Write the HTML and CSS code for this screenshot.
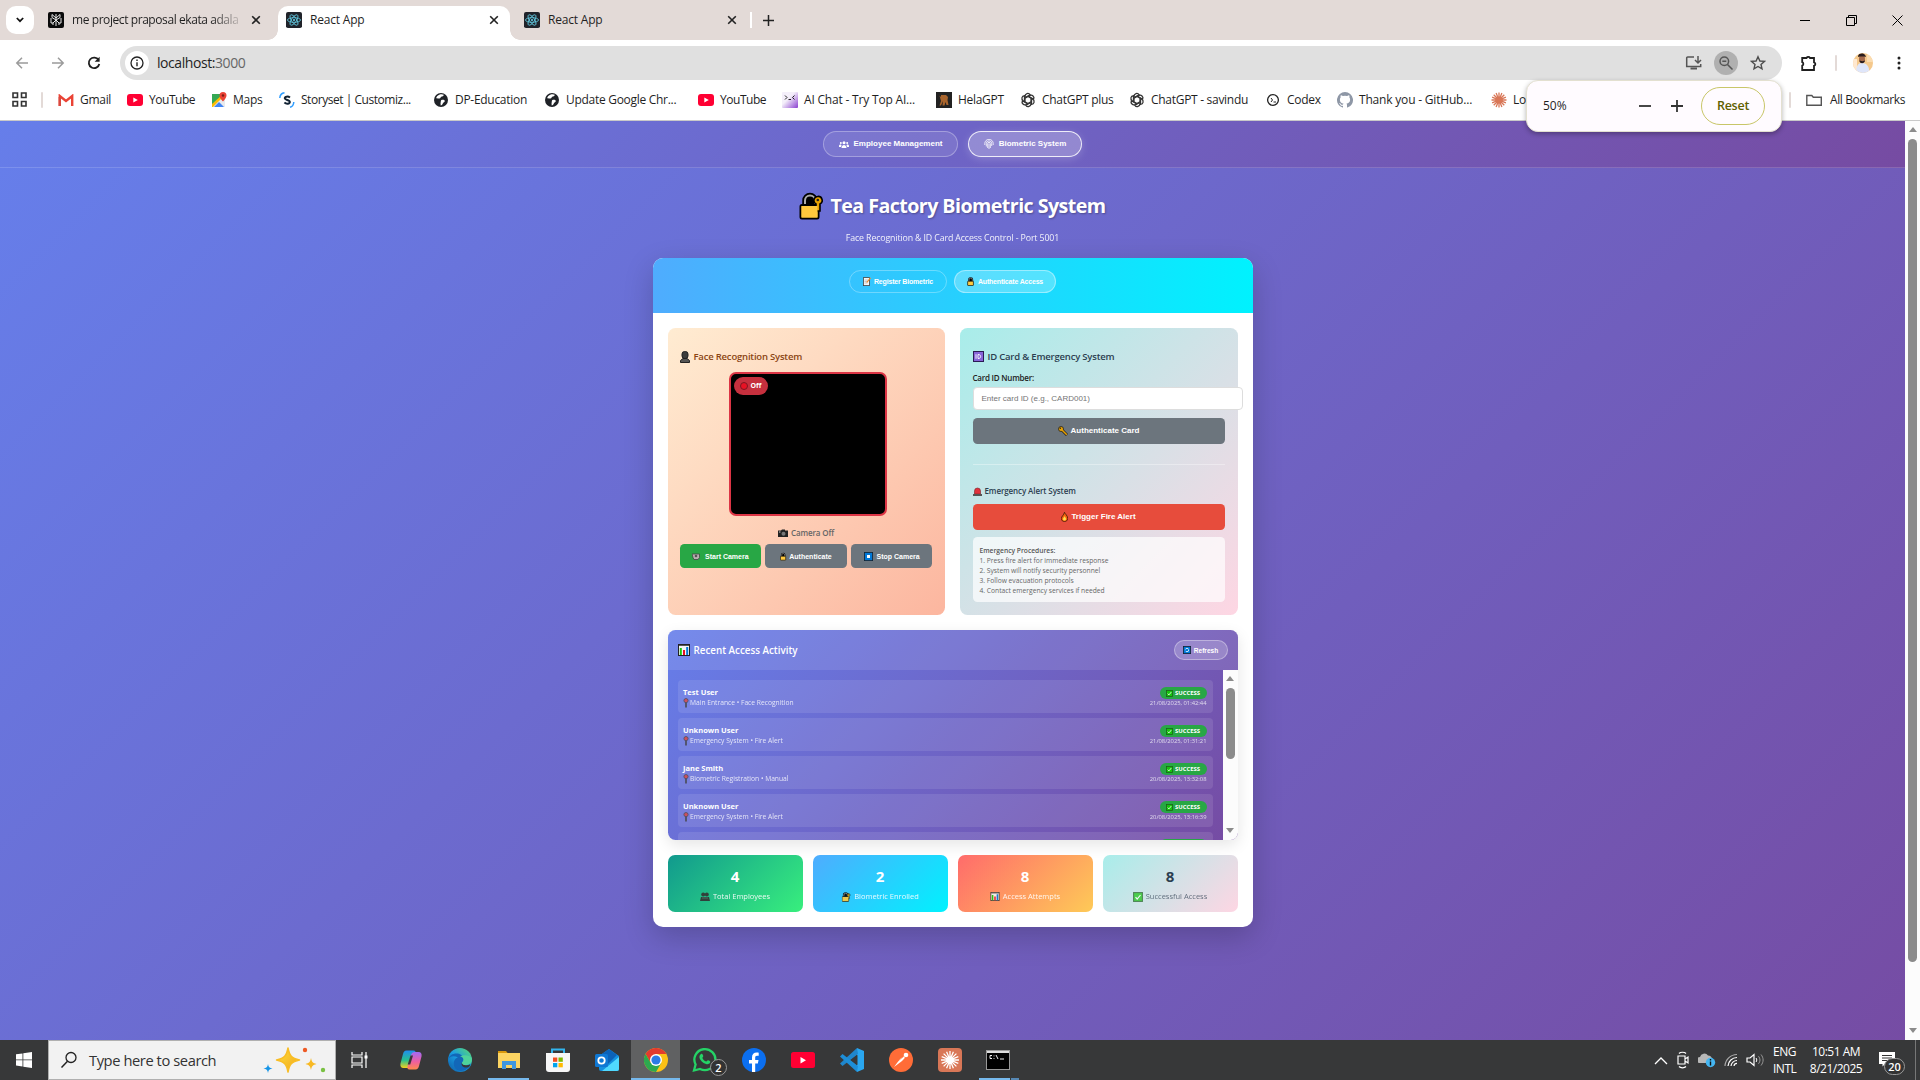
FILE: index.html
```html
<!DOCTYPE html>
<html lang="en">
<head>
<meta charset="utf-8">
<title>React App</title>
<link rel="stylesheet" href="styles.css">
</head>
<body>
<svg class="defs" width="0" height="0" aria-hidden="true">
  <defs>
    <linearGradient id="gEdge" x1="0" y1="1" x2="1" y2="0"><stop offset="0" stop-color="#0c59a4"/><stop offset=".5" stop-color="#1b9de2"/><stop offset="1" stop-color="#5fe06a"/></linearGradient>
    <linearGradient id="gCopA" x1="0" y1="0" x2="0" y2="1"><stop offset="0" stop-color="#1f8df0"/><stop offset=".55" stop-color="#27c08f"/><stop offset="1" stop-color="#f4d01c"/></linearGradient>
    <linearGradient id="gCopB" x1="0" y1="0" x2="0" y2="1"><stop offset="0" stop-color="#a06af5"/><stop offset=".55" stop-color="#ee5fa0"/><stop offset="1" stop-color="#ff8a4c"/></linearGradient>
    <linearGradient id="gStar" x1="0" y1="0" x2="1" y2="1"><stop offset="0" stop-color="#ffe13d"/><stop offset="1" stop-color="#f0a31a"/></linearGradient>
    <linearGradient id="gAi" x1="0" y1="0" x2="1" y2="1"><stop offset=".4" stop-color="#f4effa"/><stop offset="1" stop-color="#8a3fd0"/></linearGradient>
  </defs>
  <symbol id="react" viewBox="0 0 16 18" preserveAspectRatio="none"><rect width="16" height="18" rx="2" fill="#20232a"/><g fill="none" stroke="#61c7de" stroke-width=".9"><ellipse cx="8" cy="9" rx="6.6" ry="2.6"/><ellipse cx="8" cy="9" rx="6.6" ry="2.6" transform="rotate(60 8 9)"/><ellipse cx="8" cy="9" rx="6.6" ry="2.6" transform="rotate(120 8 9)"/></g><circle cx="8" cy="9" r="1.2" fill="#61c7de"/></symbol>
  <symbol id="close" viewBox="0 0 10 10"><path d="M1.2 1.2l7.6 7.6M8.8 1.2L1.2 8.8" stroke="#222" stroke-width="1.6"/></symbol>
  <symbol id="yt" viewBox="0 0 16 12"><rect width="16" height="12" rx="3" fill="#f03"/><path d="M6.3 3.4v5.2L10.8 6z" fill="#fff"/></symbol>
  <symbol id="globe" viewBox="0 0 16 16"><circle cx="8" cy="8" r="7" fill="#1f2227"/><path d="M5 3.5c2-1.8 4.500-1.600 5.800-.7-.3 1.500-1.500 1.600-2.600 2-.8.4-.5 1.600-1.800 1.800-1.300 0-2-.4-3.200-.4.1-1 .8-2 1.800-2.700zM8.300 8c1.500-.7 3.400-.3 3.500 1.100 0 1.500-1.600 1.300-2 2.400-.3.900-1 1.900-2.100 2 .1-1-.3-1.500-.1-2.600.2-.9.200-2.300.7-2.900z" fill="#fff"/></symbol>
  <symbol id="gpt" viewBox="0 0 16 16"><g fill="none" stroke="#333" stroke-width="1.250"><path d="M5 9.700V4.200a2.800 2.800 0 0 1 5.100-1.500L5.600 5.300"/><path d="M5 9.700V4.200a2.800 2.800 0 0 1 5.100-1.500L5.600 5.300" transform="rotate(60 8 8)"/><path d="M5 9.700V4.200a2.800 2.800 0 0 1 5.100-1.500L5.600 5.300" transform="rotate(120 8 8)"/><path d="M5 9.700V4.200a2.800 2.800 0 0 1 5.100-1.500L5.600 5.300" transform="rotate(180 8 8)"/><path d="M5 9.700V4.200a2.800 2.800 0 0 1 5.100-1.500L5.600 5.300" transform="rotate(240 8 8)"/><path d="M5 9.700V4.200a2.800 2.800 0 0 1 5.100-1.500L5.600 5.300" transform="rotate(300 8 8)"/></g></symbol>
  <symbol id="burst" viewBox="-8 -8 16 16"><path d="M0-7.500V7.500M-7.500 0H7.500M-5.300-5.300L5.300 5.300M-5.300 5.300L5.300-5.300M-2.900-6.900L2.900 6.900M2.900-6.900L-2.900 6.900M-6.900-2.900L6.900 2.900M-6.900 2.900L6.900-2.900" stroke="currentColor" stroke-width="1.300"/></symbol>
  <symbol id="lock" viewBox="0 0 24 28"><path d="M6 14V8.500a5 5 0 0 1 10 0V14" fill="#000" stroke="#000" stroke-width="5.500"/><path d="M6 13V8.500a5 5 0 0 1 10 0V13" fill="#000" stroke="#aaa" stroke-width="2"/><rect x="1.500" y="13" width="18" height="13.500" rx="1.500" fill="#ffc83d" stroke="#000" stroke-width="2"/></symbol>
  <symbol id="lockkey" viewBox="0 0 24 28"><use href="#lock" width="24" height="28"/><path d="M18.500 4.500a4 4 0 0 1 2.500 7.500v7h-4v-7a4 4 0 0 1 1.500-7.500z" fill="#e8a200" stroke="#000" stroke-width="1.600"/><rect x="2.500" y="14" width="16" height="11.500" fill="#ffc83d"/><circle cx="18.800" cy="8" r="1.300" fill="#222"/></symbol>
  <symbol id="chart" viewBox="0 0 12 12"><rect x=".5" y=".5" width="11" height="11" fill="#f4f4f4" stroke="#222"/><path d="M1 1.500h10" stroke="#555"/><rect x="1.800" y="4" width="2" height="7" fill="#16c60c"/><rect x="5" y="6" width="2" height="5" fill="#e81224"/><rect x="8.200" y="3" width="2" height="8" fill="#0078d7"/></symbol>
  <symbol id="check" viewBox="0 0 12 12"><rect x=".7" y=".7" width="10.600" height="10.600" fill="#16c60c" stroke="#1b5e1b" stroke-width="1.300"/><path d="M3 6.200l2 2.200 4-4.800" fill="none" stroke="#fff" stroke-width="1.400"/></symbol>
  <symbol id="pin" viewBox="0 0 6 10"><path d="M3 3v6.500" stroke="#444" stroke-width="1.800"/><circle cx="3" cy="2.600" r="2.100" fill="#e0453e" stroke="#444" stroke-width=".8"/></symbol>
  <symbol id="person" viewBox="0 0 10 12"><rect x="2" y=".5" width="6" height="7" rx="2.600" fill="#3c3c3c" stroke="#222"/><path d="M.5 11.500V9.500l2.500-2h4l2.500 2v2z" fill="#555" stroke="#222"/></symbol>
  <symbol id="people" viewBox="0 0 10 9"><circle cx="3.200" cy="2.500" r="2" fill="#333"/><circle cx="6.800" cy="2.500" r="2" fill="#333"/><path d="M0 9l1-4h8l1 4z" fill="#333"/><path d="M2 6h6" stroke="#6a8a80" stroke-width=".6"/></symbol>
  <symbol id="memo" viewBox="0 0 8 9"><rect x=".4" y=".6" width="6" height="8" fill="#f5f5f5" stroke="#444" stroke-width=".8"/><path d="M1.500 3h3.500M1.500 4.500h3.500M1.500 6h3" stroke="#999" stroke-width=".5"/><path d="M7.500.8L3.800 5.500" stroke="#f08a24" stroke-width="1.200"/></symbol>
</svg>

<div class="tabstrip">
  <button class="tabsearch"><svg width="8" height="6" viewBox="0 0 8 6"><path d="M.8 1l3.200 3.200L7.200 1" fill="none" stroke="#111" stroke-width="1.700"/></svg></button>
  <div class="tab first"><svg width="16" height="16" viewBox="0 0 16 16"><rect width="16" height="16" rx="2" fill="#0a0a0a"/><path d="M8 2v12M4 2.500v3L8 8l4-2.500v-3L8 6 4 2.500zM3 6v5h2l3-3 3 3h2V6M5 13v-2l3-3 3 3v2" fill="none" stroke="#e8e8e8" stroke-width="1"/></svg><span class="t faded">me project praposal ekata adala</span><svg class="x" width="10" height="10"><use href="#close"/></svg></div>
  <div class="tab active"><svg width="16" height="16"><use href="#react"/></svg><span class="t">React App</span><svg class="x" width="10" height="10"><use href="#close"/></svg></div>
  <div class="tab last"><svg width="16" height="16"><use href="#react"/></svg><span class="t">React App</span><svg class="x" width="10" height="10"><use href="#close"/></svg></div>
  <i class="tabsep"></i>
  <svg class="plus" width="11" height="11" viewBox="0 0 11 11"><path d="M5.500 0v11M0 5.500h11" stroke="#222" stroke-width="1.500"/></svg>
  <div class="winctl">
    <svg width="11" height="11" viewBox="0 0 11 11"><path d="M0 5.500h10" stroke="#000"/></svg>
    <svg width="11" height="11" viewBox="0 0 11 11"><path d="M.5 2.500h8v8h-8zM2.500 2.500v-2h8v8h-2" fill="none" stroke="#000"/></svg>
    <svg width="11" height="11" viewBox="0 0 11 11"><path d="M.5.5l10 10M10.500.5l-10 10" stroke="#000"/></svg>
  </div>
</div>

<div class="toolbar">
  <svg class="nav" width="16" height="16" viewBox="0 0 16 16"><path d="M14 8H2.800M8 2.800L2.800 8 8 13.200" fill="none" stroke="#9b9b9b" stroke-width="1.500"/></svg>
  <svg class="nav" width="16" height="16" viewBox="0 0 16 16"><path d="M2 8h11.200M8 2.800L13.200 8 8 13.200" fill="none" stroke="#9b9b9b" stroke-width="1.500"/></svg>
  <svg class="nav" width="16" height="16" viewBox="0 0 16 16"><path d="M12.600 5A5.300 5.300 0 1 0 13.300 9" fill="none" stroke="#1f1f1f" stroke-width="1.800"/><path d="M13.600 1.800v5h-5z" fill="#1f1f1f"/></svg>
  <div class="omnibox">
    <span class="info"><svg width="14" height="14" viewBox="0 0 14 14"><circle cx="7" cy="7" r="6" fill="none" stroke="#222" stroke-width="1.300"/><path d="M7 6.300v4M7 3.500v1.500" stroke="#222" stroke-width="1.400"/></svg></span>
    <span class="t url">localhost:<em>3000</em></span>
    <svg class="install" width="18" height="16" viewBox="0 0 18 16"><path d="M9 2H2.700A1 1 0 0 0 1.700 3v8.500h14V9" fill="none" stroke="#555" stroke-width="1.500"/><path d="M5.500 12.500h6.500v2H5.500z" fill="#555"/><path d="M13 1v6.500M10 5l3 3 3-3" fill="none" stroke="#555" stroke-width="1.500"/></svg>
    <span class="zoomic"><svg width="16" height="16" viewBox="0 0 16 16"><circle cx="6.300" cy="6.300" r="4.300" fill="none" stroke="#555" stroke-width="1.500"/><path d="M9.500 9.500l5 5M4.300 6.300h4" stroke="#555" stroke-width="1.500"/></svg></span>
    <svg width="16" height="16" viewBox="0 0 16 16"><path d="M8 1.800l1.900 4.200 4.500.4-3.400 3 1 4.500L8 11.500l-4 2.400 1-4.500-3.400-3 4.500-.4z" fill="none" stroke="#4d4d4d" stroke-width="1.400"/></svg>
  </div>
  <svg class="ext" width="18" height="18" viewBox="0 0 18 18"><path d="M2.200 4h4.300a2 2 0 0 1 3.500 0h4v4.300a1.800 1.800 0 0 1 0 3.500V16H2.200v-4.300a1.900 1.900 0 0 0 0-3.500z" fill="none" stroke="#1f1f1f" stroke-width="1.800"/></svg>
  <i class="sep"></i>
  <svg class="avatar" width="20" height="20" viewBox="0 0 20 20"><clipPath id="av"><circle cx="10" cy="10" r="10"/></clipPath><g clip-path="url(#av)"><rect width="20" height="20" fill="#f5c98d"/><path d="M0 6h4v14H0z" fill="#ffe8d0"/><path d="M14 0h6v9h-6z" fill="#fbdcb0"/><path d="M3 20c0-7 2-10 6-10s8 3 7 10z" fill="#dfe6fa"/><ellipse cx="9" cy="6" rx="3" ry="4" fill="#a5694a"/><path d="M5 4c0-5 7-5 8 0l-2-.5H7zM6.500 7.500c0 3.500 5 3.500 5.500 0l-2.500.8z" fill="#2a1c1c"/></g></svg>
  <svg class="dots" width="4" height="16" viewBox="0 0 4 16"><circle cx="2" cy="3" r="1.500"/><circle cx="2" cy="8" r="1.500"/><circle cx="2" cy="13" r="1.500"/></svg>
</div>

<div class="bookmarks">
  <div class="bm apps"><svg width="15" height="15" viewBox="0 0 15 15"><path d="M1 1h4.500v4.500H1zM9.500 1H14v4.500H9.500zM1 9.500h4.500V14H1zM9.500 9.500H14V14H9.500z" fill="none" stroke="#333" stroke-width="1.600"/></svg></div>
  <i class="sep"></i>
  <div class="bm"><svg width="16" height="12" viewBox="0 0 16 12"><path d="M1.800 12V2l6.200 5 6.200-5v10" fill="none" stroke="#ea4335" stroke-width="2.400"/><path d="M1.800 3v9" stroke="#d9493f" stroke-width="2.400"/></svg><span class="t">Gmail</span></div>
  <div class="bm tight"><svg width="16" height="12"><use href="#yt"/></svg><span class="t">YouTube</span></div>
  <div class="bm"><svg width="16" height="16" viewBox="0 0 16 16"><path d="M1 2h13v13H1z" fill="#34a853"/><path d="M1 15L14 2v13z" fill="#e8eaed"/><path d="M3 15l5-5 5 5z" fill="#4285f4"/><path d="M1 12L12 2h3L2 15H1z" fill="#fbbc04"/><path d="M12 0a3.500 3.500 0 0 1 3.500 3.500c0 2.500-3.500 6-3.500 6s-3.500-3.500-3.500-6A3.500 3.500 0 0 1 12 0z" fill="#ea4335"/><circle cx="12" cy="3.500" r="1.200" fill="#7a1d15"/></svg><span class="t">Maps</span></div>
  <div class="bm tight"><svg width="16" height="16" viewBox="0 0 16 16"><path d="M.8 6C1 3 2.500 1.200 5.500.8M14.800 10c-.2 3-1.500 4.800-3.800 5.200" fill="none" stroke="#2d9cff" stroke-width="1.500"/><path d="M11 5.500C9 4 5.500 4.400 5.800 6.400c.3 1.800 5 1.300 5 3.600 0 2-3.500 2.200-5.400.6" fill="none" stroke="#123" stroke-width="2"/></svg><span class="t">Storyset | Customiz...</span></div>
  <div class="bm"><svg width="16" height="16"><use href="#globe"/></svg><span class="t">DP-Education</span></div>
  <div class="bm"><svg width="16" height="16"><use href="#globe"/></svg><span class="t">Update Google Chr...</span></div>
  <div class="bm tight"><svg width="16" height="12"><use href="#yt"/></svg><span class="t">YouTube</span></div>
  <div class="bm loose"><svg width="16" height="16" viewBox="0 0 16 16"><rect width="16" height="16" rx="1" fill="url(#gAi)"/><path d="M3 3.500l2 2-2 2M12.500 3.500l-2 2 2 2M6.500 7.500h2.500" fill="none" stroke="#222"/></svg><span class="t">AI Chat - Try Top AI...</span></div>
  <div class="bm"><svg width="16" height="16" viewBox="0 0 16 16"><rect width="16" height="16" fill="#222"/><path d="M3.500 3.500L5 5V3h5l2 2-.5 3 1 5h-2l-1-3-1 3.500h-2L7 9 5 13.500H3.500L5 9z" fill="#a8642c"/></svg><span class="t">HelaGPT</span></div>
  <div class="bm"><svg width="16" height="16"><use href="#gpt"/></svg><span class="t">ChatGPT plus</span></div>
  <div class="bm"><svg width="16" height="16"><use href="#gpt"/></svg><span class="t">ChatGPT - savindu</span></div>
  <div class="bm"><svg width="16" height="16" viewBox="0 0 16 16"><circle cx="8" cy="8" r="5.400" fill="none" stroke="#222" stroke-width="1.300"/><path d="M6 6l1.500 2L6 10M8.500 10h2.500" fill="none" stroke="#222"/></svg><span class="t">Codex</span></div>
  <div class="bm loose"><svg width="16" height="16" viewBox="0 0 16 16"><path d="M8 0a8 8 0 0 0-2.500 15.600c.4.100.5-.2.500-.4v-1.400c-2.200.5-2.700-1-2.700-1-.4-.9-.9-1.200-.9-1.200-.7-.5.1-.5.100-.5.800.1 1.200.8 1.200.8.700 1.200 1.900.9 2.300.7.100-.5.300-.9.500-1.100-1.800-.2-3.600-.9-3.600-4 0-.9.300-1.600.8-2.200-.1-.2-.4-1 .1-2.100 0 0 .7-.2 2.200.8a7.600 7.600 0 0 1 4 0c1.500-1 2.200-.8 2.200-.8.500 1.100.2 1.900.1 2.100.5.600.8 1.300.8 2.200 0 3.100-1.900 3.800-3.700 4 .3.300.6.700.6 1.500v2.200c0 .2.100.5.500.4A8 8 0 0 0 8 0z" fill="#8e97a6"/></svg><span class="t">Thank you - GitHub...</span></div>
  <div class="bm claude"><svg width="16" height="16"><use href="#burst"/></svg><span class="t">Lo</span></div>
  <i class="sep"></i>
  <div class="bm all"><svg width="16" height="12" viewBox="0 0 16 12"><path d="M.8 1.500h5l1.500 1.800h8v8H.8z" fill="none" stroke="#555" stroke-width="1.400"/></svg><span class="t">All Bookmarks</span></div>
</div>

<div class="zoombubble">
  <span class="t pct">50%</span>
  <svg class="minus" width="12" height="12" viewBox="0 0 12 12"><path d="M0 6h12" stroke="#333" stroke-width="1.800"/></svg>
  <svg width="12" height="12" viewBox="0 0 12 12"><path d="M0 6h12M6 0v12" stroke="#333" stroke-width="1.800"/></svg>
  <button class="reset"><span class="t">Reset</span></button>
</div>

<div class="viewport">
  <div class="page">
    <nav class="topnav">
      <button class="pill emp"><svg width="10" height="7" viewBox="0 0 10 7"><g fill="#fff"><circle cx="5" cy="1.800" r="1.500"/><circle cx="1.800" cy="2" r="1"/><circle cx="8.200" cy="2" r="1"/><path d="M2.500 7c0-4 5-4 5 0zM0 5c0-2 2.500-2 2.500-.5L2 6H0zM10 5c0-2-2.500-2-2.500-.5L8 6h2z"/></g></svg><span class="t">Employee Management</span></button>
      <button class="pill bio"><svg width="10" height="10" viewBox="0 0 10 10"><g fill="none" stroke="#fff" stroke-width=".8"><path d="M.8 6V4.500a4.200 4.200 0 0 1 8.400 0V6M2.300 7.500v-3a2.700 2.700 0 0 1 5.400 0V7M3.700 9V4.600a1.300 1.300 0 0 1 2.600 0V9M5 4.500V10"/></g></svg><span class="t">Biometric System</span></button>
    </nav>
    <main class="main">
      <h1><svg width="24" height="28"><use href="#lockkey"/></svg><span class="t">Tea Factory Biometric System</span></h1>
      <p class="sub"><span class="t">Face Recognition &amp; ID Card Access Control - Port 5001</span></p>
      <div class="card">
        <div class="modes">
          <button class="mode reg"><svg width="8" height="9"><use href="#memo"/></svg><span class="t">Register Biometric</span></button>
          <button class="mode on auth"><svg width="8" height="9"><use href="#lock"/></svg><span class="t">Authenticate Access</span></button>
        </div>
        <div class="content">
          <div class="panels">
            <section class="panel face">
              <h3><svg width="10" height="12"><use href="#person"/></svg><span class="t">Face Recognition System</span></h3>
              <div class="camera"><span class="off"><i></i><span class="t">Off</span></span></div>
              <p class="camstate"><svg width="10" height="8" viewBox="0 0 10 8"><path d="M0 1.500h3L4 .5h3v1h3V8H0z" fill="#222"/><circle cx="5.500" cy="4.700" r="2" fill="#777"/><path d="M1 3h1.500" stroke="#ccc"/></svg><span class="t">Camera Off</span></p>
              <div class="btns">
                <button class="b green"><svg width="9" height="7" viewBox="0 0 9 7"><path d="M0 1h7.500v3.500L6 6.500H2L1 4.500z" fill="#b9b0b0" stroke="#444" stroke-width=".8"/><circle cx="4" cy="3" r="1.300" fill="#555"/></svg><span class="t">Start Camera</span></button>
                <button class="b grey a2"><svg width="7" height="9"><use href="#lock"/></svg><span class="t">Authenticate</span></button>
                <button class="b grey a3"><svg width="9" height="9" viewBox="0 0 9 9"><rect x=".4" y=".4" width="8.200" height="8.200" fill="#0078d7" stroke="#123" stroke-width=".8"/><rect x="3" y="3" width="3" height="3" fill="#fff"/></svg><span class="t">Stop Camera</span></button>
              </div>
            </section>
            <section class="panel idc">
              <h3><svg width="11" height="11" viewBox="0 0 11 11"><rect x=".5" y=".5" width="10" height="10" fill="#8764d8" stroke="#2b1b55"/><path d="M3 3.200v4.600M5 3.500v4c3.500.3 3.500-4.300 0-4z" fill="none" stroke="#fff" stroke-width=".9"/></svg><span class="t">ID Card &amp; Emergency System</span></h3>
              <label><span class="t">Card ID Number:</span></label>
              <div class="input"><span class="t">Enter card ID (e.g., CARD001)</span></div>
              <button class="wide grey"><svg width="10" height="10" viewBox="0 0 10 10"><path d="M3 3l6 6" stroke="#222" stroke-width="3"/><circle cx="3" cy="3" r="2.500" fill="#e8a200" stroke="#222" stroke-width=".8"/><path d="M3 3l5.800 5.800" stroke="#e8a200" stroke-width="1.500"/><circle cx="2.300" cy="2.300" r=".7" fill="#222"/></svg><span class="t">Authenticate Card</span></button>
              <hr>
              <h4><svg width="9" height="9" viewBox="0 0 9 9"><path d="M1.500 7V4a3 3 0 0 1 6 0v3z" fill="#e0323c" stroke="#7a2228" stroke-width=".6"/><path d="M0 8h9" stroke="#555" stroke-width="2"/></svg><span class="t">Emergency Alert System</span></h4>
              <button class="wide red"><svg width="7" height="10" viewBox="0 0 7 10"><path d="M3.500.3C4 2 6.700 3.500 6.700 6.500c0 4-6.400 4-6.400 0C.3 4.500 3 3 3.500.3z" fill="#f7630c" stroke="#3a1a08" stroke-width=".8"/><path d="M3.600 4c.3 1.200 1.400 1.600 1.400 3a1.500 1.500 0 0 1-3 0c0-1.400 1.300-1.500 1.600-3z" fill="#ffe14d"/></svg><span class="t">Trigger Fire Alert</span></button>
              <div class="proc"><strong><span class="t">Emergency Procedures:</span></strong><ol><li><span class="t">1. Press fire alert for immediate response</span></li><li><span class="t">2. System will notify security personnel</span></li><li><span class="t">3. Follow evacuation protocols</span></li><li><span class="t">4. Contact emergency services if needed</span></li></ol></div>
            </section>
          </div>
          <section class="activity">
            <header><h3><svg width="12" height="12"><use href="#chart"/></svg><span class="t">Recent Access Activity</span></h3>
              <button class="refresh"><svg width="8" height="8" viewBox="0 0 8 8"><rect x=".4" y=".4" width="7.200" height="7.200" fill="#0078d7" stroke="#123" stroke-width=".8"/><circle cx="4" cy="4" r="1.700" fill="none" stroke="#fff" stroke-width=".8" stroke-dasharray="4 1.300"/></svg><span class="t">Refresh</span></button></header>
            <div class="scroll">
              <div class="rows">
                <article class="row"><div><b class="t">Test User</b><small><svg width="6" height="10"><use href="#pin"/></svg><span class="t">Main Entrance • Face Recognition</span></small></div><div class="r"><span class="ok"><svg width="7" height="7"><use href="#check"/></svg><span class="t">SUCCESS</span></span><time class="t">21/08/2025, 01:42:44</time></div></article>
                <article class="row"><div><b class="t">Unknown User</b><small><svg width="6" height="10"><use href="#pin"/></svg><span class="t">Emergency System • Fire Alert</span></small></div><div class="r"><span class="ok"><svg width="7" height="7"><use href="#check"/></svg><span class="t">SUCCESS</span></span><time class="t">21/08/2025, 01:31:21</time></div></article>
                <article class="row"><div><b class="t">Jane Smith</b><small><svg width="6" height="10"><use href="#pin"/></svg><span class="t">Biometric Registration • Manual</span></small></div><div class="r"><span class="ok"><svg width="7" height="7"><use href="#check"/></svg><span class="t">SUCCESS</span></span><time class="t">20/08/2025, 13:32:08</time></div></article>
                <article class="row"><div><b class="t">Unknown User</b><small><svg width="6" height="10"><use href="#pin"/></svg><span class="t">Emergency System • Fire Alert</span></small></div><div class="r"><span class="ok"><svg width="7" height="7"><use href="#check"/></svg><span class="t">SUCCESS</span></span><time class="t">20/08/2025, 13:16:39</time></div></article>
                <article class="row"><div></div><div class="r"><span class="ok"></span></div></article>
              </div>
              <div class="sbar"><i class="up"></i><i class="thumb"></i><i class="down"></i></div>
            </div>
          </section>
          <div class="stats">
            <div class="stat s1"><strong>4</strong><span><svg width="10" height="9"><use href="#people"/></svg><span class="t">Total Employees</span></span></div>
            <div class="stat s2"><strong>2</strong><span><svg width="10" height="10"><use href="#lockkey"/></svg><span class="t">Biometric Enrolled</span></span></div>
            <div class="stat s3"><strong>8</strong><span><svg width="10" height="9"><use href="#chart"/></svg><span class="t">Access Attempts</span></span></div>
            <div class="stat s4"><strong>8</strong><span><svg width="10" height="10"><use href="#check"/></svg><span class="t">Successful Access</span></span></div>
          </div>
        </div>
      </div>
    </main>
  </div>
  <div class="sbar pagebar"><i class="up"></i><i class="thumb"></i><i class="down"></i></div>
</div>

<div class="taskbar">
  <div class="start"><svg width="16" height="16" viewBox="0 0 16 16"><path d="M0 2.300l6.500-.9v6.100H0zM7.300 1.300L16 0v7.500H7.300zM0 8.300h6.500v6.200L0 13.600zM7.300 8.300H16V16l-8.700-1.300z" fill="#fff"/></svg></div>
  <div class="search"><svg width="18" height="18" viewBox="0 0 18 18"><circle cx="11" cy="6.500" r="5" fill="none" stroke="#222" stroke-width="1.300"/><path d="M7.500 10.300L1.500 16.500" stroke="#222" stroke-width="1.500"/></svg><span class="t">Type here to search</span>
    <svg class="spark" width="64" height="30" viewBox="0 0 64 30"><path d="M25 3c1.500 8 3.500 10 11.500 12C28.500 17 26.500 19 25 27c-1.500-8-3.500-10-11.500-12C21.500 13 23.500 11 25 3z" fill="url(#gStar)" stroke="#f8bd25" stroke-width="1.500" stroke-linejoin="round"/><path d="M48 13c.8 4 1.800 5 5.500 6-3.700 1-4.700 2-5.500 6-.8-4-1.800-5-5.500-6 3.700-1 4.700-2 5.500-6z" fill="#f8b923"/><path d="M5 19c.5 3 1.500 4 4.500 4.500C6.500 24 5.500 25 5 28c-.5-3-1.500-4-4.500-4.500C3.500 23 4.500 22 5 19z" fill="#1594e6"/><circle cx="42" cy="5" r="2.200" fill="#ee5a24"/><circle cx="60" cy="25" r="2.200" fill="#7ac143"/></svg>
  </div>
  <div class="tasks">
    <div class="task tv"><svg width="18" height="16" viewBox="0 0 18 16"><path d="M1 0v3h10V0M1 16v-3h10v3M1 5h10v6H1zM15 0v16" fill="none" stroke="#fff" stroke-width="1.200"/><path d="M13.500 3.500h3v3h-3z" fill="#fff"/></svg></div>
    <div class="task"><svg width="24" height="24" viewBox="0 0 24 24"><path d="M7.500 2.500h7c2 0 2.500 1.500 2 3L13 17c-.7 2-1.700 3-3.500 3H4.500C2 20 .9 18 1.500 15.500L4 6c.6-2 1.500-3.500 3.500-3.500z" fill="url(#gCopA)"/><path d="M16.500 21.500h-6c-2 0-2.500-1.500-2-3L12 7c.7-2 1.700-3 3.500-3h4C22 4 23.100 6 22.500 8.500L20 18c-.6 2-1.500 3.500-3.500 3.500z" fill="url(#gCopB)"/><path d="M11.500 7.500h2.500l-2.800 9H8.700z" fill="#373839"/></svg></div>
    <div class="task"><svg width="24" height="24" viewBox="0 0 24 24"><circle cx="12" cy="12" r="12" fill="url(#gEdge)"/><path d="M0 12C2 3 15 4 15.500 11c.3 2-1.500 2.500-1.500 4 0 3 5 4 9 1-3 8-15 9.500-17 2C5 14 7 10 10 9.500 5 7 1 9 0 12z" fill="#1267b8"/><path d="M24 11c0 4-3 6-7 6-3 0-4-1.500-2.500-3 2-2 1-5-2.500-5.500 4-2 11-1.500 12 2.500z" fill="#4fd39b"/><path d="M14.500 13.500c-1.500 2 .5 3.800 3 3.700 2 0 3.500-.3 4.500-1 .5 2-1.500 3-3 3.300-4 .5-7-2.500-4.500-6z" fill="#373839"/></svg></div>
    <div class="task line"><svg width="24" height="20" viewBox="0 0 24 20"><path d="M1 1h8l2 2.500H1z" fill="#d9980c"/><path d="M1 3h22v15H1z" fill="#fcd462"/><path d="M5 19v-8h14v8h-4v-4H9v4z" fill="#4097e0"/></svg></div>
    <div class="task"><svg width="24" height="24" viewBox="0 0 24 24"><path d="M6 6V1.500h12V6" fill="none" stroke="#32b5ee" stroke-width="2"/><path d="M0 5h24v16a3 3 0 0 1-3 3H3a3 3 0 0 1-3-3z" fill="#f7f7f7"/><path d="M7 9.500h4.300v4.300H7z" fill="#f25022"/><path d="M12.500 9.500h4.300v4.300h-4.300z" fill="#7fba00"/><path d="M7 15h4.300v4.300H7z" fill="#00a4ef"/><path d="M12.500 15h4.300v4.300h-4.300z" fill="#ffb900"/></svg></div>
    <div class="task"><svg width="24" height="24" viewBox="0 0 24 24"><path d="M4 8l10-7 10 7v13a2 2 0 0 1-2 2H6a2 2 0 0 1-2-2z" fill="#1490df"/><path d="M4 8l10-7 8 6-10 10z" fill="#0c62b8"/><path d="M24 9v12a2 2 0 0 1-2 2H7z" fill="#50d9ff"/><rect y="6" width="13" height="13" rx="1.500" fill="#0f78d4"/><circle cx="6.500" cy="12.500" r="3.200" fill="none" stroke="#fff" stroke-width="1.800"/></svg></div>
    <div class="task line hl"><svg width="24" height="24" viewBox="0 0 24 24"><circle cx="12" cy="12" r="12" fill="#fbc116"/><path d="M12 6h10.400A12 12 0 0 0 1.600 6l5.200 9z" fill="#e33b2e"/><path d="M1.600 6A12 12 0 0 0 12 24l5.200-9H6.800z" fill="#2da94f"/><circle cx="12" cy="12" r="6" fill="#fff"/><circle cx="12" cy="12" r="4.600" fill="#2c7be5"/></svg></div>
    <div class="task"><svg width="26" height="26" viewBox="0 0 26 26"><path d="M2 23.500l1.600-6A10.500 10.500 0 1 1 8 21.900z" fill="none" stroke="#25d366" stroke-width="2.300"/><path d="M9 7c1-.7 1.600 0 2.200 1.800.3 1-.8 1.600-.8 2.100.8 1.700 2 2.800 3.800 3.500.8 0 1.200-1.500 2-1.200 2 .9 2.500 1.200 1.800 2.500-1 1.500-2.500 1.700-4 1.200-3.500-1.200-5.700-3.500-6.500-6C7.200 9.300 7.800 7.700 9 7z" fill="#25d366"/></svg><span class="cnt">2</span></div>
    <div class="task"><svg width="24" height="24" viewBox="0 0 24 24"><circle cx="12" cy="12" r="12" fill="#0b6ff0"/><path d="M10 24v-8.500H7V12h3V9.500C10 6.300 11.800 4.500 14.800 4.500c1 0 1.900.2 1.900.2v3H15c-1.400 0-1.800.9-1.800 1.800V12h3.300l-.6 3.500h-2.700V24z" fill="#fff"/></svg></div>
    <div class="task"><svg width="24" height="16" viewBox="0 0 24 16"><rect width="24" height="16" rx="2.500" fill="#f03"/><path d="M9.500 5v6.500l5.500-3.300z" fill="#fff"/></svg></div>
    <div class="task"><svg width="24" height="24" viewBox="0 0 24 24"><path d="M17 0l7 3v18l-7 3z" fill="#2aa7f0"/><path d="M17 0L0 15.500 2.500 18 18 6z" fill="#1f86cc"/><path d="M17 24L0 8.500 2.500 6 18 18z" fill="#1d8ed8"/><path d="M17.500 7v10L11 12z" fill="#373839"/></svg></div>
    <div class="task"><svg width="24" height="24" viewBox="0 0 24 24"><circle cx="12" cy="12" r="12" fill="#ff6c37"/><path d="M5 19l6-8 3.500-2.500 1.500 1.300L13 13z" fill="#fff"/><circle cx="17" cy="7" r="2.300" fill="#fff"/><path d="M9 13l5-4" stroke="#ff6c37" stroke-width=".6"/></svg></div>
    <div class="task"><svg width="24" height="24" viewBox="-12 -12 24 24"><rect x="-12" y="-12" width="24" height="24" rx="4" fill="#d97757"/><path d="M0-9V9M-9 0H9M-6.400-6.400L6.400 6.400M-6.400 6.400L6.400-6.400M-3.400-8.300L3.400 8.300M3.400-8.300L-3.400 8.300M-8.300-3.400L8.300 3.400M-8.300 3.400L8.300-3.400" stroke="#fff" stroke-width="1.300"/></svg></div>
    <div class="task line two"><svg width="24" height="20" viewBox="0 0 24 20"><rect x=".5" y=".5" width="23" height="19" fill="#000" stroke="#999"/><path d="M1 2h22" stroke="#ddd" stroke-width="2"/><path d="M6 5.500H4v3h2M8 5.500v.8M8 8v.8M10 5l2 4M14 9h4" fill="none" stroke="#eee"/></svg></div>
  </div>
  <div class="tray">
    <svg width="14" height="9" viewBox="0 0 14 9"><path d="M1 8l6-6 6 6" fill="none" stroke="#fff" stroke-width="1.300"/></svg>
    <svg width="14" height="18" viewBox="0 0 14 18"><path d="M2 5h7v8H2zM9 8l3-2v6l-3-2M3 2.500C4.500.8 8.500.8 10 2.500M3 15.500c1.500 1.700 5.500 1.700 7 0" fill="none" stroke="#fff" stroke-width="1.200"/></svg>
    <svg width="18" height="16" viewBox="0 0 18 16"><path d="M2 11a3 3 0 0 1 0-6 4.500 4.500 0 0 1 8-1.500A4 4 0 0 1 14 7v4z" fill="#b8b8b8"/><circle cx="12.500" cy="10.500" r="4.700" fill="#45b6f2"/><path d="M12.500 9.500v4M12.500 7v1.500" stroke="#111" stroke-width="1.400"/></svg>
    <svg width="14" height="14" viewBox="0 0 14 14"><g fill="none" stroke="#fff" stroke-width="1.200"><path d="M1 13A12 12 0 0 1 13 1.500" stroke="#aaa"/><path d="M4 13a9 9 0 0 1 9-8.500M7 13a6 6 0 0 1 6-5.500M10 13a3 3 0 0 1 3-2.700"/></g></svg>
    <svg width="18" height="14" viewBox="0 0 18 14"><path d="M1 5h3l4-3.500v11L4 9H1z" fill="none" stroke="#fff" stroke-width="1.200"/><path d="M10 5c1 1.300 1 2.700 0 4" fill="none" stroke="#fff"/><path d="M12.500 3.200c2 2.400 2 5.200 0 7.600M15 1.500c2.800 3.500 2.800 7.500 0 11" fill="none" stroke="#999"/></svg>
    <div class="lang"><span class="t">ENG</span><span class="t">INTL</span></div>
    <div class="clock"><span class="t">10:51 AM</span><span class="t">8/21/2025</span></div>
    <div class="notif"><svg width="16" height="16" viewBox="0 0 16 16"><path d="M0 1h16v12H6l-2.500 2.500V13H0z" fill="#fff"/><path d="M3 4.500h10M3 7h10M3 9.500h6" stroke="#333"/></svg><span class="cnt">20</span></div>
  </div>
</div>
</body>
</html>
```
FILE: styles.css
```css
* { box-sizing: border-box; }
html, body { margin: 0; height: 1080px; overflow: hidden; }
body { position: relative; display: flex; flex-direction: column; background: #fff; color: #1f1f1f; font: 12px/16px "Open Sans", "Noto Sans", sans-serif; }
button { font: inherit; color: inherit; margin: 0; padding: 0; border: 0; background: none; display: flex; align-items: center; justify-content: center; }
svg { flex: none; display: block; }
.defs { position: absolute; }
.t { white-space: nowrap; display: block; }
h1, h3, h4, p, ol { margin: 0; padding: 0; }

/* tab strip */
.tabstrip { height: 40px; flex: none; background: #e3dad7; display: flex; align-items: center; }
.tabsearch { width: 28px; height: 28px; margin-left: 6px; margin-top: -1px; border-radius: 10px; background: #fff; }
.tab { display: flex; align-items: center; gap: 8px; height: 34px; letter-spacing: -.2px; }
.tab .x { margin-left: auto; }
.tab.first { width: 213px; margin-left: 14px; letter-spacing: -.42px; }
.tab.active { position: relative; width: 232px; height: 34px; margin-left: 17px; margin-top: 6px; padding: 0 11px 6px 8px; background: #fff; border-radius: 10px 10px 0 0; }
.tab.active::before, .tab.active::after { content: ""; position: absolute; bottom: 0; width: 10px; height: 10px; }
.tab.active::before { left: -10px; background: radial-gradient(circle at 0 0, #e3dad7 9.500px, #fff 10px); }
.tab.active::after { right: -10px; background: radial-gradient(circle at 100% 0, #e3dad7 9.500px, #fff 10px); }
.tab.last { width: 213px; margin-left: 14px; }
.faded { width: 168px; color: transparent; background: linear-gradient(90deg, #1f1f1f 140px, rgba(31,31,31,.15)); -webkit-background-clip: text; background-clip: text; }
.tabsep { width: 2px; height: 16px; margin-left: 13px; background: #fff; }
.plus { margin-left: 11px; }
.winctl { margin-left: auto; padding-right: 17px; display: flex; gap: 35px; }

/* toolbar */
.toolbar { height: 46px; flex: none; display: flex; align-items: center; padding-left: 14px; }
.nav { margin-right: 20px; }
.omnibox { width: 1662px; height: 34px; margin-left: -2px; border-radius: 17px; background: #e0e0e0; display: flex; align-items: center; padding: 0 16px 0 5px; }
.info { width: 24px; height: 24px; border-radius: 50%; background: #fff; display: flex; align-items: center; justify-content: center; }
.url { margin-left: 8px; font-size: 14px; letter-spacing: -.43px; }
.url em { font-style: normal; color: #666; }
.install { margin-left: auto; }
.zoomic { width: 24px; height: 24px; margin: 0 12px 0 11px; border-radius: 50%; background: #b0b0b0; display: flex; align-items: center; justify-content: center; }
.sep { width: 2px; height: 16px; background: #e3dad7; border-radius: 1px; }
.ext { margin: 0 17px 0 18px; }
.avatar { margin-left: 16px; }
.dots { margin-left: 24px; fill: #222; }

/* bookmarks bar */
.bookmarks { height: 35px; flex: none; display: grid; grid-template-columns: 30px 17px 69px 84px 68px 154px 111px 154px 84px 154px 84px 109px 136px 72px 154px 298px 17px 1fr; align-items: center; padding: 0 0 7px 11px; border-bottom: 1px solid #c9c9c9; letter-spacing: -.29px; }
.bm { display: flex; align-items: center; gap: 6px; }
.apps { padding-left: 1px; }
.tight { letter-spacing: -.46px; }
.loose { letter-spacing: -.19px; }
.all { gap: 8px; letter-spacing: -.38px; }
.claude { color: #d97757; }
.claude .t { color: #1f1f1f; }

.zoombubble { position: absolute; z-index: 5; left: 1526px; top: 80px; width: 256px; height: 52px; border-radius: 12px; background: #fffbff; border: 1px solid #e3e0d0; box-shadow: 0 2px 5px rgba(0,0,0,.3); display: flex; align-items: center; padding: 0 16px; }
.minus { margin-left: auto; margin-right: 20px; }
.reset { width: 64px; height: 38px; margin-left: 18px; border: 1px solid #c8c668; border-radius: 19px; color: #5f6000; font-size: 12.500px; font-weight: 600; letter-spacing: -.25px; }

/* page */
.viewport { height: 919px; flex: none; display: flex; overflow: hidden; }
.page { width: 1905px; height: 986px; color: #fff; }
.topnav { height: 47px; display: flex; justify-content: center; align-items: center; gap: 10px; background: linear-gradient(135deg, #667eea, #764ba2); border-bottom: 1px solid rgba(255,255,255,.15); }
.pill { height: 26px; gap: 5px; border: 1px solid rgba(255,255,255,.3); border-radius: 13px; background: rgba(255,255,255,.1); font: bold 8px/10px "Liberation Sans", Arial, sans-serif; }
.emp { width: 135px; }
.bio { width: 114px; border-color: rgba(255,255,255,.85); background: rgba(255,255,255,.25); box-shadow: 0 2px 8px rgba(255,255,255,.2); }
.main { height: 939px; display: flex; flex-direction: column; align-items: center; background: linear-gradient(135deg, #667eea, #764ba2); }
h1 { height: 28px; margin-top: 24px; display: flex; align-items: center; gap: 7px; font-size: 19.700px; line-height: 28px; font-weight: 700; letter-spacing: -.58px; text-shadow: 1px 1px 2px rgba(0,0,0,.3); }
.sub { margin-top: 12px; height: 12px; font-size: 8.800px; line-height: 12px; letter-spacing: -.13px; opacity: .9; }
.card { width: 600px; height: 669px; margin-top: 14px; border-radius: 10px; background: #fff; overflow: hidden; box-shadow: 0 10px 30px rgba(0,0,0,.2); }
.modes { height: 55px; display: flex; justify-content: center; align-items: flex-start; gap: 7px; padding-top: 12px; background: linear-gradient(90deg, #4facfe, #00f2fe); }
.mode { height: 23px; gap: 3px; border: 1px solid rgba(255,255,255,.3); border-radius: 12px; font: bold 7px/9px "Liberation Sans", Arial, sans-serif; letter-spacing: -.18px; }
.reg { width: 98px; }
.auth { width: 102px; }
.mode.on { background: rgba(255,255,255,.25); border-color: rgba(255,255,255,.4); }
.content { padding: 15px; display: flex; flex-direction: column; gap: 15px; }
.panels { display: grid; grid-template-columns: 277px 278px; gap: 15px; height: 287px; }
.panel { min-width: 0; border-radius: 7.500px; padding: 22px 12px 0; display: flex; flex-direction: column; }
.panel h3, .activity h3 { display: flex; align-items: center; gap: 4px; font-size: 9.500px; line-height: 13px; font-weight: 600; }
.panel h3 { letter-spacing: -.2px; }
.activity h3 { font-size: 9.800px; }
.face { background: linear-gradient(135deg, #ffecd2, #fcb69f); color: #8b4513; }
.idc { padding: 22px 13px 0; background: linear-gradient(135deg, #a8edea, #fed6e3); color: #2c3e50; }
.camera { align-self: center; width: 158px; height: 144px; margin: 9px 0 0 3px; padding: 3px; border: 2px solid #dc3545; border-radius: 7px; background: #000; }
.off { display: flex; width: 34px; height: 18px; align-items: center; justify-content: center; gap: 3px; border-radius: 9px; background: rgba(220,53,69,.9); color: #fff; font-size: 7px; font-weight: 700; }
.off i { width: 8px; height: 8px; border-radius: 50%; background: #e81224; border: 1px solid #7d1722; }
.camstate { display: flex; justify-content: center; align-items: center; gap: 3px; margin-top: 11px; font-size: 8px; line-height: 11px; font-weight: 600; letter-spacing: -.14px; color: #666; }
.btns { display: grid; grid-template-columns: 1fr 1fr 1fr; gap: 4px; margin-top: 6px; }
.b { height: 24px; border-radius: 4.500px; gap: 4px; color: #fff; font: bold 7px/9px "Liberation Sans", Arial, sans-serif; }
.a2 { gap: 2px; }
.green { background: #28a745; }
.grey { background: #6c757d; }
.red { background: #e74c3c; }
label { margin-top: 9px; font-size: 8px; line-height: 12px; font-weight: 600; letter-spacing: -.23px; color: #222; }
.input { width: 270px; height: 23px; margin-top: 3px; border: 1px solid #ddd; border-radius: 4px; background: #fff; display: flex; align-items: center; padding-left: 8px; color: #757575; font: 8px/10px "Liberation Sans", Arial, sans-serif; }
.wide { height: 26px; margin-top: 8px; gap: 3px; border-radius: 4.500px; color: #fff; font: bold 8px/10px "Liberation Sans", Arial, sans-serif; }
hr { width: 100%; height: 1px; margin: 20px 0 0; border: 0; background: rgba(255,255,255,.35); }
h4 { display: flex; align-items: center; gap: 3px; margin-top: 20px; font-size: 8px; line-height: 12px; font-weight: 600; letter-spacing: -.1px; }
.wide.red { margin-top: 7px; }
.proc { height: 65px; margin-top: 7px; padding: 9px 7px; border-radius: 4.500px; background: rgba(255,255,255,.7); color: #666; font-size: 6.700px; line-height: 10px; }
.proc strong { font-weight: 600; color: #555; }
.proc ol { list-style: none; }

.activity { height: 210px; border-radius: 7.500px; overflow: hidden; background: linear-gradient(135deg, #667eea, #764ba2); box-shadow: 0 5px 15px rgba(0,0,0,.1); }
.activity header { height: 40px; display: flex; align-items: center; justify-content: space-between; padding: 0 10px; background: rgba(255,255,255,.1); }
.refresh { width: 54px; height: 20px; gap: 3px; border: 1px solid rgba(255,255,255,.35); border-radius: 10px; background: rgba(255,255,255,.2); font: bold 6.600px/9px "Liberation Sans", Arial, sans-serif; }
.scroll { height: 170px; display: flex; }
.rows { flex: 1; padding: 10px 10px 0; display: flex; flex-direction: column; gap: 5px; overflow: hidden; }
.row { flex: none; height: 33px; display: flex; justify-content: space-between; padding: 7px 6px 0 5.500px; border-radius: 4px; background: rgba(255,255,255,.1); }
.row b { font-size: 7.500px; line-height: 11px; font-weight: 700; }
.row small { display: flex; align-items: center; gap: 1px; font-size: 6.700px; line-height: 10px; opacity: .8; }
.r { display: flex; flex-direction: column; align-items: flex-end; }
.ok { width: 47px; height: 12px; border-radius: 6px; background: #28a745; display: flex; align-items: center; justify-content: center; gap: 2px; font-size: 5.900px; line-height: 10px; font-weight: 700; }
.r time { font-size: 5.800px; line-height: 9px; opacity: .75; }

.sbar { width: 15px; flex: none; background: #fcfcfc; display: flex; flex-direction: column; align-items: center; }
.sbar i { flex: none; }
.up { margin-top: 6px; border: 4.500px solid transparent; border-top: 0; border-bottom: 5px solid #8b8b8b; }
.down { margin: auto 0 7px; border: 4.500px solid transparent; border-bottom: 0; border-top: 5px solid #8b8b8b; }
.thumb { width: 9px; height: 71px; margin-top: 7px; border-radius: 5px; background: #8b8b8b; }
.pagebar .thumb { height: 823px; }

.stats { display: grid; grid-template-columns: repeat(4, 1fr); gap: 10px; }
.stat { height: 57px; border-radius: 7px; padding-top: 11px; display: flex; flex-direction: column; align-items: center; }
.stat strong { font-size: 15px; line-height: 20px; font-weight: 700; }
.stat > span { display: flex; align-items: center; gap: 3px; margin-top: 5px; font-size: 7.500px; line-height: 11px; opacity: .9; }
.s1 { background: linear-gradient(135deg, #11998e, #38ef7d); }
.s2 { background: linear-gradient(135deg, #4facfe, #00f2fe); }
.s3 { background: linear-gradient(135deg, #ff6b6b, #feca57); }
.s4 { background: linear-gradient(135deg, #a8edea, #fed6e3); color: #2c3e50; }
.s4 > span { opacity: .7; }

/* taskbar */
.taskbar { height: 40px; flex: none; display: flex; background: #373839; color: #fff; }
.start { width: 48px; display: flex; align-items: center; justify-content: center; }
.search { width: 288px; height: 40px; display: flex; align-items: center; padding-left: 11px; gap: 11px; background: #f2f2f2; border: 1px solid #b0b0b0; color: #333; font-size: 14.700px; letter-spacing: -.42px; }
.spark { margin-left: auto; margin-right: 8px; }
.tasks { display: flex; }
.task { position: relative; width: 49px; display: flex; align-items: center; justify-content: center; }
.tv { width: 50px; padding-right: 3px; }
.task.line::after { content: ""; position: absolute; left: 4px; right: 4px; bottom: 0; height: 2px; background: #76b9ed; }
.task.hl { background: #606162; }
.task.hl::after { left: 0; right: 0; }
.task.two { padding-right: 1px; }
.task.two::after { right: 0; left: 5px; background: linear-gradient(90deg, #76b9ed 31px, #373839 31px, #373839 32px, #5688b4 32px, #5688b4 40px, transparent 40px); }
.cnt { position: absolute; right: 2px; top: 19px; width: 17px; height: 17px; border: 1px solid #999; border-radius: 9px; background: #333; color: #fff; font-size: 11px; line-height: 15px; font-weight: 600; text-align: center; }
.tray { margin-left: auto; display: flex; align-items: center; gap: 8px; }
.lang, .clock { display: flex; flex-direction: column; line-height: 17px; letter-spacing: -.5px; }
.lang { width: 25px; margin-left: 1px; }
.clock { width: 54px; align-items: center; margin: 0 4px 0 3px; }
.notif { position: relative; width: 41px; height: 40px; padding: 11px 0 0 4px; margin-right: 4px; border-right: 1px solid #777; }
.notif .cnt { width: 21px; right: 10px; top: 18px; }
```
